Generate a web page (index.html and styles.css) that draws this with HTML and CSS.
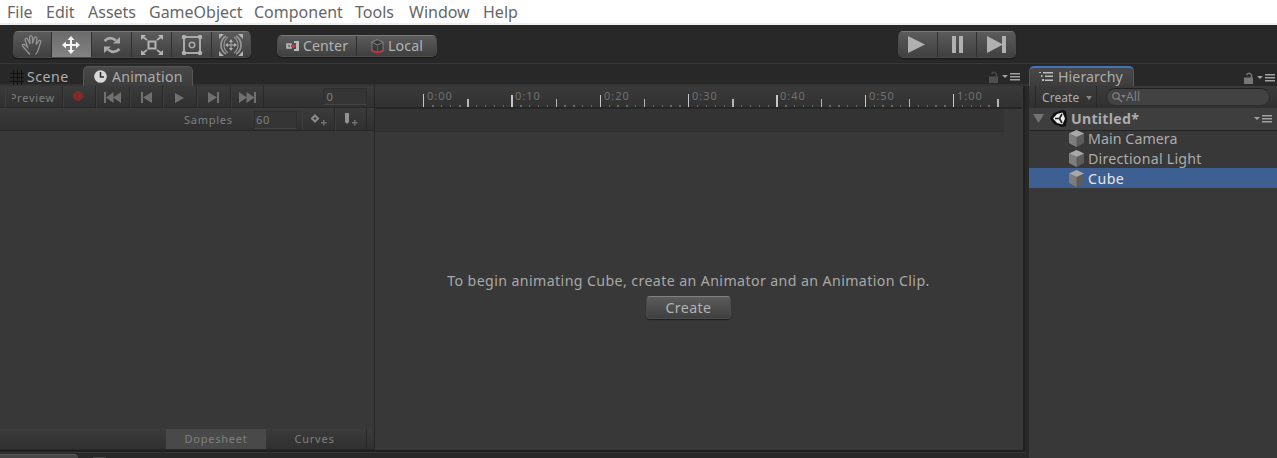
FILE: index.html
```html
<!DOCTYPE html>
<html lang="en">
<head>
<meta charset="utf-8">
<title>Editor</title>
<link rel="stylesheet" href="styles.css">
</head>
<body>
<nav class="menu"><span class="m1">File</span><span class="m2">Edit</span><span class="m3">Assets</span><span class="m4">GameObject</span><span class="m5">Component</span><span class="m6">Tools</span><span class="m7">Window</span><span class="m8">Help</span></nav>
<header class="toolbar">
  <div class="group tools">
    <button><svg width="22" height="22" viewBox="0 0 22 22"><path d="M9 20.500Q5 16 1.500 12Q1 10 3.500 10.500L6.500 13L4 5.500Q5 3 7 5.500L9 10L8.500 3Q10 .5 11.500 3V9.500L13.500 3.500Q15.500 2 16 4.500L15 10.500L18 6.500Q20.500 6 19.500 8.500L17.500 15Q17 18 14.500 20.500" fill="none" stroke="#929292" stroke-width="1.300"/></svg></button>
    <button class="on"><svg width="18" height="18" viewBox="0 0 18 18"><path d="M9 0l3.500 4H10v4h4V5.500L18 9l-4 3.500V10h-4v4h2.500L9 18l-3.500-4H8v-4H4v2.500L0 9l4-3.500V8h4V4H5.500z" fill="#f4f4f4"/></svg></button>
    <button><svg width="20" height="18" viewBox="0 0 20 18"><path d="M2.500 5Q8-.5 14 4.500M17.500 13Q12 18.500 6 13.500" fill="none" stroke="#aaa" stroke-width="2.600"/><path d="M18 1v6.500h-7zM2 17v-6.500h7z" fill="#aaa"/></svg></button>
    <button><svg width="22" height="20" viewBox="0 0 22 20"><path d="M7.500 6.500h7v7h-7z" fill="none" stroke="#b4b4b4" stroke-width="2"/><path d="M2 2l4 3M20 2l-4 3M2 18l4-3M20 18l-4-3" stroke="#b0b0b0" stroke-width="1.800"/><path d="M0 0h5L0 5zM22 0h-5l5 5zM0 20h5l-5-5zM22 20h-5l5-5z" fill="#b4b4b4"/></svg></button>
    <button><svg width="22" height="22" viewBox="0 0 22 22"><path d="M3 3h16v16H3z" fill="none" stroke="#a8a8a8" stroke-width="2"/><circle cx="11" cy="11" r="2.700" fill="none" stroke="#a8a8a8" stroke-width="1.500"/><g fill="#b0b0b0"><circle cx="3" cy="3" r="2.300"/><circle cx="19" cy="3" r="2.300"/><circle cx="3" cy="19" r="2.300"/><circle cx="19" cy="19" r="2.300"/></g></svg></button>
    <button><svg width="24" height="24" viewBox="0 0 24 24"><g fill="none" stroke="#949494" stroke-width="1.800"><path d="M7 3Q2 6 2 12T7 21M17 3Q22 6 22 12T17 21"/><path d="M9 4Q5 7 5 12T9 20M15 4Q19 7 19 12T15 20" stroke-width="1.200"/><path d="M12 8v8M8 12h8" stroke-width="1.300"/></g><path d="M12 6l2 3h-4zM12 18l2-3h-4zM6 12l3-2v4zM18 12l-3-2v4zM0 1h5L0 6zM24 1h-5l5 5zM0 23h5l-5-5zM24 23h-5l5-5z" fill="#b0b0b0"/></svg></button>
  </div>
  <div class="group pivot">
    <button><svg width="14" height="10" viewBox="0 0 14 10"><path d="M1 3h4v4H1z" fill="#777" stroke="#bbb" stroke-width="1.500"/><path d="M8 0h5v10H8V8h2V2H8z" fill="#bbb"/><path d="M5 4h2V3l3 2-3 2V6H5z" fill="#d13a43"/></svg><span>Center</span></button>
    <button><svg width="15" height="16" viewBox="0 0 16 16"><path d="M8 1l6 3v9l-6 2-6-2V4z" fill="#3a3a3a" stroke="#757575" stroke-width="1.300"/><path d="M2 4l6 3 6-3" stroke="#888" fill="none"/><path d="M8 7v8M1 12l3 2 4 1 4-1 3-2" stroke="#d52b38" stroke-width="1.200" fill="none"/></svg><span>Local</span></button>
  </div>
  <div class="group play">
    <button><svg width="18" height="17" viewBox="0 0 18 17"><path d="M0 0l17 8.500L0 17z"/></svg></button>
    <button><svg width="11" height="17" viewBox="0 0 11 17"><path d="M0 0h4v17H0zM7 0h4v17H7z"/></svg></button>
    <button><svg width="19" height="17" viewBox="0 0 19 17"><path d="M0 0l16 8.500L0 17zM15 0h4v17h-4z"/></svg></button>
  </div>
</header>
<main class="work">
  <section class="left">
    <div class="tabs">
      <div class="scene"><svg width="14" height="15" viewBox="0 0 14 15"><path d="M3.500 0v15M7.500 0v15M11.500 0v15M0 3.500h14M0 7.500h14M0 11.500h14" stroke="#111"/></svg><span>Scene</span></div>
      <div class="tab anim"><svg width="13" height="13" viewBox="0 0 13 13"><circle cx="6.500" cy="6.500" r="6.300" fill="#d8d8d8"/><path d="M6.500 2v5H10" fill="none" stroke="#333" stroke-width="1.600"/></svg><span>Animation</span></div>
      <div class="opts dim"><svg width="10" height="12" viewBox="0 0 10 12"><path d="M0 5.500h9V12H0z" fill="#505050"/><path d="M2.500 3Q5-.5 7.500 3v3" fill="none" stroke="#484848" stroke-width="1.500"/></svg><svg width="18" height="8" viewBox="0 0 18 8"><path d="M0 2h6L3 5zM8 0h10v1.500H8zM8 3h10v1.500H8zM8 6h10v1.500H8z"/></svg></div>
    </div>
    <div class="animation">
      <div class="controls">
        <div class="bar transport">
          <div class="cell preview"><span>Preview</span></div>
          <div class="cell rec"><i></i></div>
          <div class="cell"><svg width="17" height="11" viewBox="0 0 17 11"><path d="M0 0h2v11H0zM2 5.500L9.500 0v11zM9 5.500L17 0v11z"/></svg></div>
          <div class="cell"><svg width="11" height="11" viewBox="0 0 11 11"><path d="M0 0h2v11H0zM2 5.500L11 0v11z"/></svg></div>
          <div class="cell"><svg width="9" height="10" viewBox="0 0 9 10"><path d="M0 0l9 5-9 5z"/></svg></div>
          <div class="cell"><svg width="11" height="11" viewBox="0 0 11 11"><path d="M0 0l9 5.500L0 11zM9 0h2v11H9z"/></svg></div>
          <div class="cell"><svg width="17" height="11" viewBox="0 0 17 11"><path d="M0 0l8 5.500L0 11zM7.500 0l8 5.500-8 5.500zM15 0h2v11h-2z"/></svg></div>
          <div class="field frame">0</div>
        </div>
        <div class="bar samples">
          <span class="slabel">Samples</span><div class="field rate">60</div>
          <div class="cell add"><svg width="18" height="13" viewBox="0 0 18 13"><path d="M5 1.500l3 3-3 3-3-3z" fill="none" stroke="#8b8b8b" stroke-width="2"/><path d="M11 8h2V6h1.500v2h2v1.500h-2v2H13v-2h-2z"/></svg></div>
          <div class="cell add two"><svg width="16" height="14" viewBox="0 0 16 14"><path d="M2 0h4v9l-2 2-2-2z" fill="#929292"/><path d="M9 9h2V7h1.500v2h2v1.500h-2v2H11v-2H9z"/></svg></div>
        </div>
        <div class="empty"></div>
        <div class="bar modes"><div class="dope">Dopesheet</div><div class="curves">Curves</div></div>
      </div>
      <div class="timeline">
        <svg class="ruler" width="647" height="21" viewBox="0 1 647 21">
          <path d="M57 20h2v2h-2zM66 20h1v2h-1zM75 20h1v2h-1zM84 20h2v2h-2zM101 20h1v2h-1zM110 20h1v2h-1zM119 20h1v2h-1zM128 20h1v2h-1zM145 20h2v2h-2zM154 20h1v2h-1zM163 20h1v2h-1zM172 20h1v2h-1zM189 20h2v2h-2zM198 20h2v2h-2zM207 20h1v2h-1zM216 20h1v2h-1zM234 20h1v2h-1zM242 20h2v2h-2zM251 20h2v2h-2zM260 20h1v2h-1zM278 20h1v2h-1zM287 20h1v2h-1zM295 20h2v2h-2zM304 20h2v2h-2zM322 20h1v2h-1zM331 20h1v2h-1zM340 20h1v2h-1zM349 20h1v2h-1zM366 20h1v2h-1zM375 20h1v2h-1zM384 20h1v2h-1zM393 20h1v2h-1zM410 20h2v2h-2zM419 20h1v2h-1zM428 20h1v2h-1zM437 20h1v2h-1zM454 20h2v2h-2zM463 20h2v2h-2zM472 20h1v2h-1zM481 20h1v2h-1zM499 20h1v2h-1zM507 20h2v2h-2zM516 20h2v2h-2zM525 20h1v2h-1zM543 20h1v2h-1zM552 20h1v2h-1zM560 20h2v2h-2zM569 20h2v2h-2zM587 20h1v2h-1zM596 20h1v2h-1zM605 20h1v2h-1zM613 20h2v2h-2z" fill="#676767"/>
          <path d="M48 9h1v13h-1zM136 10h2v12h-2zM225 10h1v12h-1zM313 9h1v13h-1zM401 10h2v12h-2zM490 10h1v12h-1zM578 9h1v13h-1z" fill="#c7c7c7"/>
          <path d="M92 14h2v8h-2zM181 14h1v8h-1zM269 14h1v8h-1zM357 14h2v8h-2zM446 14h1v8h-1zM534 14h1v8h-1zM622 14h2v8h-2z" fill="#b5b5b5"/>
          <g fill="#717171"><text x="52" y="15">0:00</text><text x="140" y="15">0:10</text><text x="229" y="15">0:20</text><text x="317" y="15">0:30</text><text x="405" y="15">0:40</text><text x="494" y="15">0:50</text><text x="582" y="15">1:00</text></g>
        </svg>
        <div class="range"></div>
        <div class="prompt"><span>To begin animating Cube, create an Animator and an Animation Clip.</span><button class="create">Create</button></div>
      </div>
    </div>
    <div class="lower"><div class="lowertab"></div><div class="lowericon"></div></div>
  </section>
  <aside class="hierarchy">
    <div class="tabs">
      <div class="tab htab"><svg width="15" height="12" viewBox="0 0 15 12"><path d="M0 1h2v1H0zM4 1h10v1.500H4zM2 4h1.500v2H2zM6 4.500h8V6H6zM3 8h2v2H3zM6 8.500h8V10H6z" fill="#bbb"/></svg><span>Hierarchy</span></div>
      <div class="opts"><svg width="10" height="12" viewBox="0 0 10 12"><path d="M0 5.500h9V12H0z" fill="#777"/><path d="M2.500 3Q5-.5 7.500 3v3" fill="none" stroke="#777" stroke-width="1.500"/></svg><svg width="18" height="8" viewBox="0 0 18 8"><path d="M0 2h6L3 5zM8 0h10v1.500H8zM8 3h10v1.500H8zM8 6h10v1.500H8z"/></svg></div>
    </div>
    <div class="searchbar"><div class="newitem"><span>Create</span><svg width="6" height="4" viewBox="0 0 6 4"><path d="M0 0h6L3 4z"/></svg></div><div class="search"><svg width="14" height="11" viewBox="0 0 14 11"><circle cx="4" cy="4" r="3.200" fill="none" stroke="#808080" stroke-width="1.300"/><path d="M6 6l4 4" stroke="#808080" stroke-width="1.500"/><path d="M9 3h5l-2.500 3z" fill="#808080"/></svg><span>All</span></div></div>
    <div class="root"><svg class="arrow" width="11" height="9" viewBox="0 0 11 9"><path d="M0 0h11L5.500 9z"/></svg><svg class="logo" width="17" height="17" viewBox="0 0 17 17"><path d="M0 8.500L4 3l8-3 4 1 1 7.500L16 16l-4 1-8-3z" fill="#111"/><path d="M3 8.500L7 4l5.500-1.500L15 8.500l-2.500 6L7 13z" fill="#ededed"/><path d="M9.500 8.500H5M9.500 8.500l2.500-4.500M9.500 8.500l2.500 4.500" fill="none" stroke="#222" stroke-width="1.700"/></svg><b>Untitled*</b><svg class="more" width="18" height="8" viewBox="0 0 18 8"><path d="M0 2h6L3 5zM8 0h10v1.500H8zM8 3h10v1.500H8zM8 6h10v1.500H8z"/></svg></div>
    <div class="list">
    <div class="item"><svg width="15" height="17" viewBox="0 0 15 17"><path d="M0 3.500L7.500 0 15 3.500V13l-7.500 4L0 13z" fill="#5c5c5c"/><path d="M0 3.500L7.500 0 15 3.500 7.500 7z" fill="#a8a8a8"/><path d="M0 3.500L7.500 7v10L0 13z" fill="#7e7e7e"/></svg><span>Main Camera</span></div>
    <div class="item light"><svg width="15" height="17" viewBox="0 0 15 17"><path d="M0 3.500L7.500 0 15 3.500V13l-7.500 4L0 13z" fill="#5c5c5c"/><path d="M0 3.500L7.500 0 15 3.500 7.500 7z" fill="#a8a8a8"/><path d="M0 3.500L7.500 7v10L0 13z" fill="#7e7e7e"/></svg><span>Directional Light</span></div>
    <div class="item selected"><svg width="15" height="17" viewBox="0 0 15 17"><path d="M0 3.500L7.500 0 15 3.500V13l-7.500 4L0 13z" fill="#5c5c5c"/><path d="M0 3.500L7.500 0 15 3.500 7.500 7z" fill="#a8a8a8"/><path d="M0 3.500L7.500 7v10L0 13z" fill="#7e7e7e"/></svg><span>Cube</span></div>
    </div>
  </aside>
</main>
</body>
</html>
```
FILE: styles.css
```css
* { box-sizing: border-box; }
body { margin: 0; width: 1277px; height: 458px; overflow: hidden; background: #282828; color: #acacac; font: 14.2px/20px "Noto Sans", sans-serif; letter-spacing: .08px; display: flex; flex-direction: column; }
svg { flex: none; display: block; fill: #a0a0a0; }
span, b { white-space: nowrap; }
button { font: inherit; letter-spacing: inherit; color: #b2b2b2; margin: 0; padding: 0; border: 0; display: flex; align-items: center; justify-content: center; background: linear-gradient(#5b5b5b, #404040); }
.menu { height: 25px; flex: none; background: #fff; border-bottom: 2px solid #eee; color: #666; font-size: 16px; letter-spacing: 0; line-height: 25px; display: flex; padding-left: 7px; }
.m1 { width: 39px; } .m2 { width: 42px; } .m3 { width: 61px; } .m4 { width: 105px; } .m5 { width: 101px; } .m6 { width: 54px; } .m7 { width: 74px; }
.toolbar { height: 39px; flex: none; display: flex; padding: 6px 0 0 13px; border-bottom: 1px solid #383838; }
.group { display: flex; height: 27px; border-radius: 5px; overflow: hidden; border: 1px solid #4b4b4b; border-top-color: #777; box-shadow: 0 1px 1px #171717; }
.group button { border-right: 1px solid #303030; flex: none; }
.group button:last-child { border-right: 0; }
.tools { width: 238px; }
.tools button { width: 40px; }
.tools button:first-child { width: 38px; padding-right: 2px; }
.tools button:last-child { width: 38px; }
.tools .on { background: linear-gradient(#6c6c6c, #828282); }
.tools .on svg { margin-right: 1px; }
.pivot { width: 160px; height: 22px; margin: 4px 0 0 26px; }
.pivot button { width: 79px; gap: 3px; }
.play { width: 118px; margin-left: 461px; }
.play button { width: 39px; }
.play svg { fill: #b0b0b0; }
.play button:first-child svg { margin-right: 3px; }
.work { flex: 1; display: flex; min-height: 0; }
.left { width: 1029px; flex: none; }
.tabs { height: 22px; display: flex; padding-top: 2px; }
.left .tabs { border-bottom: 2px solid #333; }
.scene { width: 83px; padding: 4px 0 0 10px; display: flex; gap: 3px; align-items: center; letter-spacing: .5px; }
.tab { display: flex; align-items: center; border: 1px solid #565656; border-bottom: 0; border-radius: 5px 5px 0 0; background: linear-gradient(#484848, #3d3d3d); }
.anim { width: 110px; gap: 5px; padding-left: 10px; margin-bottom: -2px; letter-spacing: .2px; }
.opts { margin-left: auto; display: flex; align-items: center; gap: 3px; padding-top: 4px; padding-right: 2px; }
.left .opts { padding-right: 9px; }
.animation { display: flex; width: 1025px; height: 366px; background: #383838; border: solid #202020; border-width: 0 2px 2px 0; color: #808080; }
.controls { width: 375px; border-right: 1px solid #262626; flex: none; font-size: 11px; display: flex; flex-direction: column; letter-spacing: .75px; }
.bar { height: 22px; background: linear-gradient(#3b3b3b, #303030); border-bottom: 1px solid #282828; display: flex; flex: none; }
.transport { padding-left: 5px; }
.controls svg { fill: #707070; }
.cell { width: 33.700px; border-right: 1px solid #292929; border-left: 1px solid #3d3d3d; display: flex; align-items: center; justify-content: center; padding-top: 2px; padding-right: 1px; flex: none; }
.preview { width: 58px; justify-content: flex-end; padding-right: 7px; }
.preview span { width: 43px; display: flex; justify-content: flex-end; overflow: hidden; }
.rec { width: 33px; }
.rec i { width: 10px; height: 10px; border-radius: 5px; background: #812b29; margin-right: 3px; margin-bottom: 3px; }
.field { background: #353535; border: 1px solid #2e2e2e; border-bottom-color: #444; line-height: 15px; padding-left: 2px; }
.frame { margin-left: 59px; width: 44px; height: 17px; margin-top: 2px; }
.samples { height: 23px; }
.slabel { width: 70px; margin-left: 184px; line-height: 24px; }
.rate { width: 43px; height: 18px; margin-top: 3px; padding-left: 1px; }
.cell.add { margin-left: 5px; width: 33px; padding: 2px 0 0 0; }
.cell.two { margin-left: 0; width: 32px; }
.empty { flex: 1; }
.modes { height: 21px; text-align: center; line-height: 20px; padding-left: 166px; }
.dope { width: 100px; background: #494949; }
.curves { width: 101px; border-right: 1px solid #292929; padding-right: 3px; }
.timeline { flex: 1; }
.ruler { box-sizing: content-box; background: linear-gradient(#3a3a3a, #313131); border-bottom: 2px solid #262626; font-size: 11px; letter-spacing: 1px; }
.range { width: 629px; height: 23px; background: #333; border-bottom: 1px solid #2f2f2f; }
.prompt { color: #a8a8a8; display: flex; flex-direction: column; align-items: center; padding-top: 139px; width: 627px; gap: 5px; letter-spacing: .39px; }
.create { width: 85px; height: 23px; border-radius: 4px; border: 1px solid #4b4b4b; border-top-color: #818181; box-shadow: 0 1px 1px #202020; }
.lower { height: 6px; margin-right: 4px; border-top: 1px solid #383838; display: flex; align-items: flex-end; }
.lowertab { width: 78px; height: 4px; background: #474747; border-top: 1px solid #5b5b5b; border-radius: 0 4px 0 0; margin-right: 15px; }
.lowericon { width: 13px; height: 1px; background: #484848; }
.hierarchy { width: 248px; background: #383838; }
.hierarchy .tabs { background: #282828; height: 22px; }
.htab { width: 105px; padding-left: 9px; gap: 4px; border-top: 2px solid #4473b7; }
.searchbar { height: 22px; display: flex; background: linear-gradient(#3b3b3b, #303030); padding-left: 6px; }
.newitem { width: 62px; font-size: 12px; padding: 2px 0 0 6px; display: flex; align-items: center; gap: 7px; border: solid #292929; border-width: 0 1px; }
.newitem svg { fill: #858585; }
.search { width: 164px; height: 18px; margin: 2px 0 0 9px; background: #424242; border: 1px solid #2d2d2d; border-top-color: #202020; border-radius: 9px; padding-left: 5px; display: flex; align-items: center; color: #808080; font-size: 12px; }
.root { height: 23px; background: #3e3e3e; border-bottom: 1px solid #232323; display: flex; align-items: center; padding: 0 5px 1px 4px; }
.arrow { fill: #737373; margin-right: 6px; }
.root b { margin-left: 4px; letter-spacing: .25px; }
.more { margin-left: auto; }
.list { margin-top: -3px; }
.item { height: 20px; display: flex; align-items: center; gap: 4px; padding: 1px 0 0 40px; }
.light { letter-spacing: .24px; }
.selected { background: #3e5f92; color: #e8e8e8; letter-spacing: .45px; }
```
